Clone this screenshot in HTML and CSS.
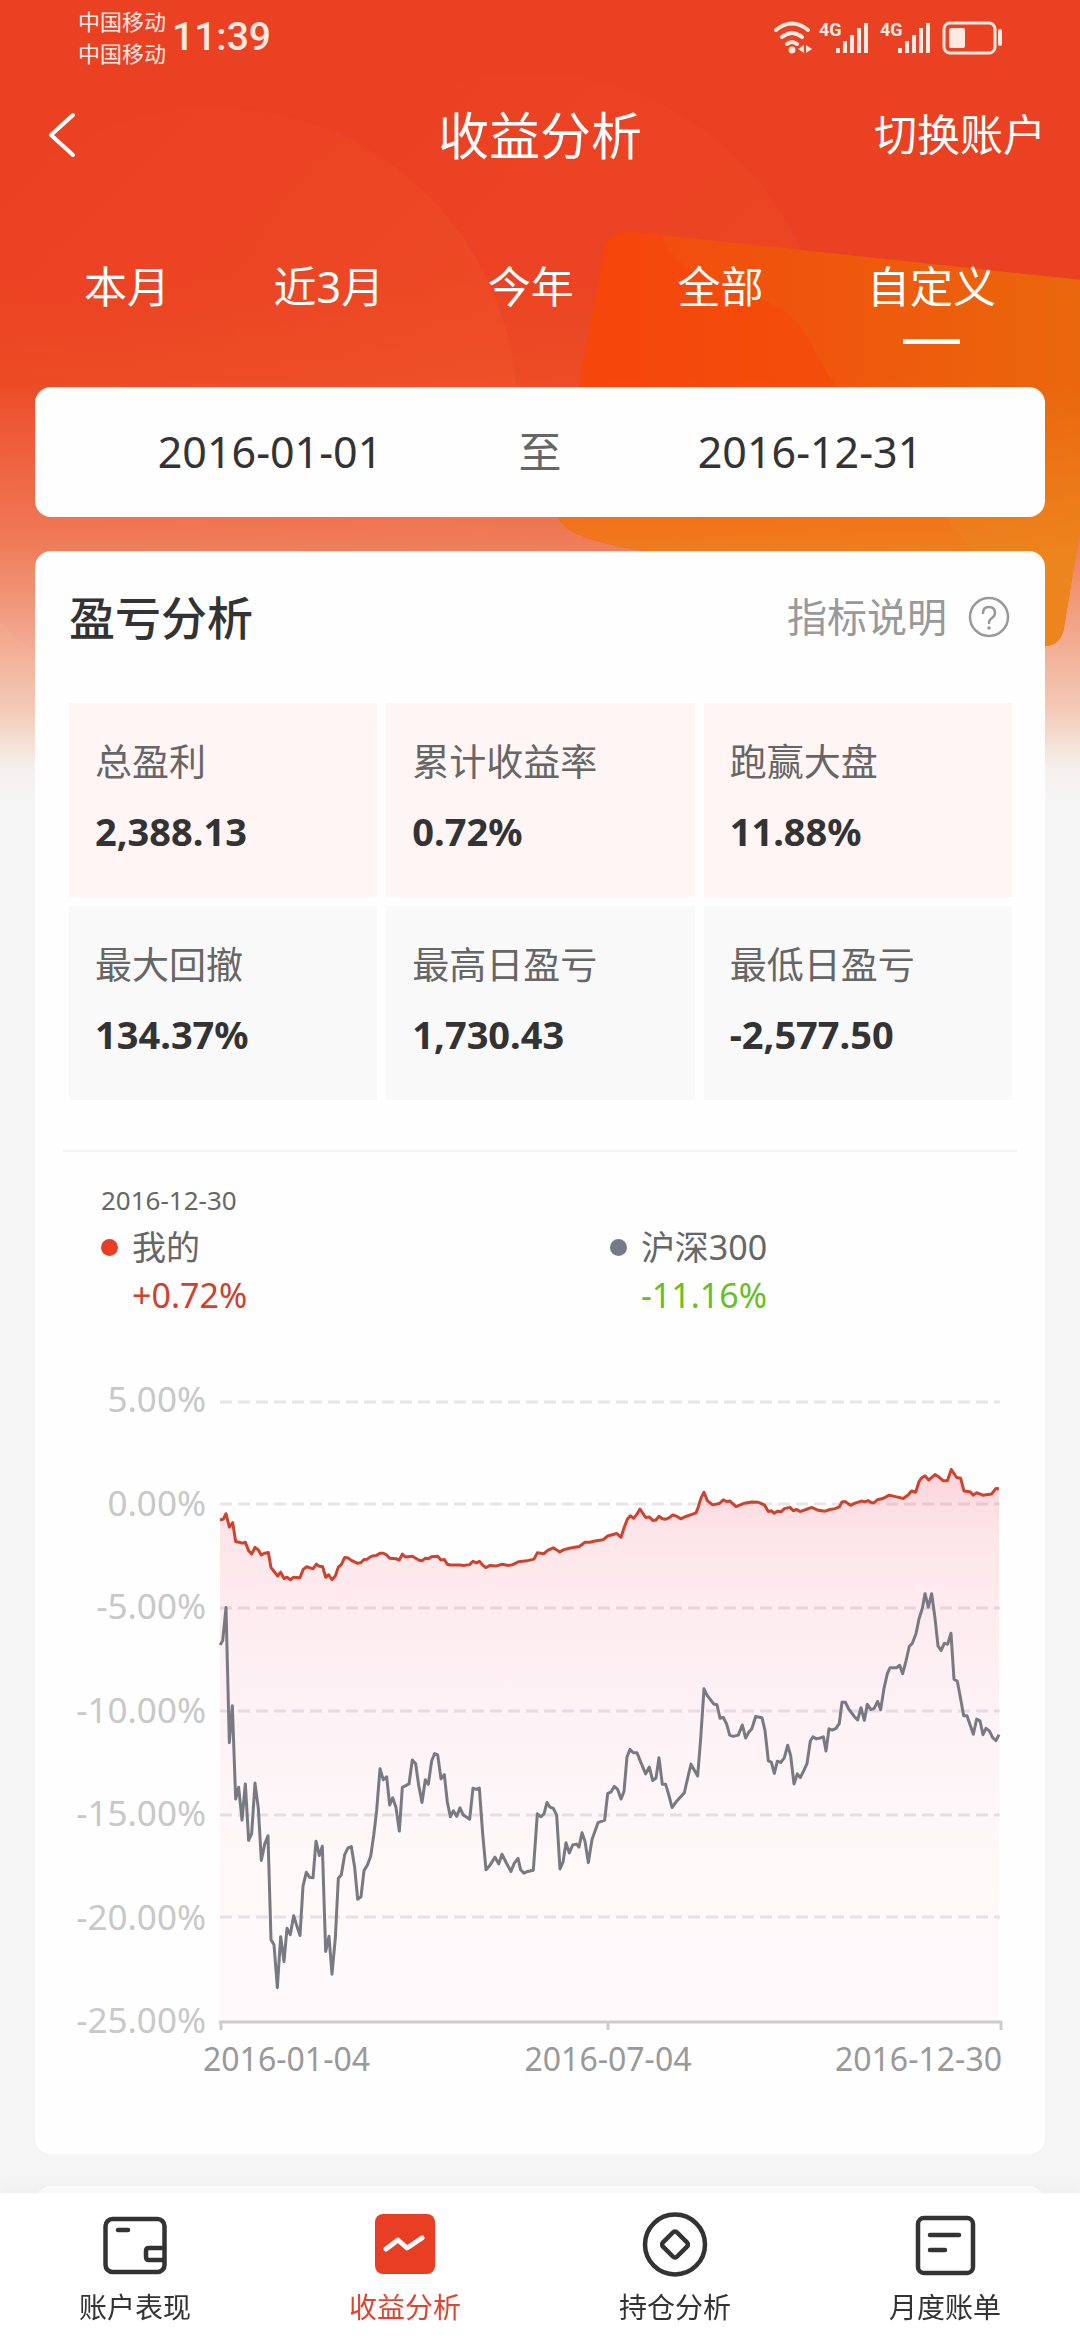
FILE: index.html
```html
<!DOCTYPE html>
<html lang="zh-CN">
<head>
<meta charset="utf-8">
<meta name="viewport" content="width=device-width, initial-scale=1">
<title>收益分析</title>
<link rel="stylesheet" href="styles.css">
</head>
<body>
<svg class="backdrop" viewBox="0 0 1080 800" preserveAspectRatio="xMidYMin slice" aria-hidden="true">
  <defs>
    <linearGradient id="base" x1="0" y1="0" x2="0" y2="1">
      <stop offset=".35" stop-color="#ea4122"/>
      <stop offset=".9" stop-color="#f06a30"/>
    </linearGradient>
    <linearGradient id="disc" x1="0" y1="0" x2="1" y2="1">
      <stop offset="0" stop-color="#f04426" stop-opacity="0"/>
      <stop offset="1" stop-color="#f05c2c"/>
    </linearGradient>
    <linearGradient id="fade" x1="0" y1="0" x2="0" y2="1">
      <stop offset="0" stop-color="#f5f5f5" stop-opacity="0"/>
      <stop offset=".38" stop-color="#f5f5f5" stop-opacity=".22"/>
      <stop offset=".78" stop-color="#f5f5f5" stop-opacity=".68"/>
      <stop offset=".93" stop-color="#f5f5f5" stop-opacity=".97"/>
      <stop offset="1" stop-color="#f5f5f5"/>
    </linearGradient>
    <linearGradient id="tile" x1="0" y1="0" x2="1" y2="0">
      <stop offset="0" stop-color="#f4470f"/>
      <stop offset=".5" stop-color="#ef560c"/>
      <stop offset="1" stop-color="#ea680c"/>
    </linearGradient>
    <linearGradient id="tileFade" gradientUnits="userSpaceOnUse" x1="0" y1="380" x2="0" y2="560">
      <stop offset="0" stop-color="#ee9024" stop-opacity="0"/>
      <stop offset="1" stop-color="#ee9024" stop-opacity=".75"/>
    </linearGradient>
    <clipPath id="tileShape">
      <path d="M632 232L1120 284L1064 628Q1060 650 1036 645L640 550Q590 542 570 530Q553 520 557 500L604 252Q608 230 632 232Z"/>
    </clipPath>
  </defs>
  <rect width="1080" height="800" fill="url(#base)"/>
  <circle cx="530" cy="370" r="296" fill="url(#disc)" opacity=".4"/>
  <circle cx="215" cy="410" r="302" fill="url(#disc)" opacity=".65"/>
  <rect y="380" width="1080" height="420" fill="url(#fade)"/>
  <g clip-path="url(#tileShape)">
    <rect x="540" y="220" width="560" height="440" fill="url(#tile)"/>
    <path d="M540 220H655Q672 270 720 285Q790 300 812 345T850 400L980 560V660H540Z" fill="#f8420c" opacity=".45"/>
    <rect x="540" y="220" width="560" height="440" fill="url(#tileFade)"/>
  </g>
</svg>

<header>
  <div class="status">
    <div class="carriers"><span>中国移动</span><span>中国移动</span></div>
    <time class="clock">11:39</time>
    <svg class="signals" viewBox="0 0 230 36" aria-hidden="true">
      <g fill="none" stroke="#ffe9e3" stroke-width="4" stroke-linecap="round">
        <path d="M4 11Q20 -2 36 11M10 18Q20 10 30 18M15 25Q20 21 25 25"/>
      </g>
      <g fill="#ffe9e3">
        <circle cx="20" cy="31" r="3.4"/>
        <path d="M26 30l6-4v8zM40 30l-6-4v8z"/>
        <text class="net" x="47" y="17">4G</text>
        <path d="M64 29h4v5h-4zM71 22h4v12h-4zM78 16h4v18h-4zM85 9h4v25h-4zM92 4h4v30h-4z"/>
        <text class="net" x="108" y="17">4G</text>
        <path d="M126 29h4v5h-4zM133 22h4v12h-4zM140 16h4v18h-4zM147 9h4v25h-4zM154 4h4v30h-4z"/>
        <rect x="177" y="9" width="16" height="20" rx="2"/>
        <rect x="226" y="10" width="4" height="17" rx="2"/>
      </g>
      <rect x="172" y="4" width="51" height="30" rx="6" fill="none" stroke="#ffe9e3" stroke-width="3"/>
    </svg>
  </div>
  <div class="titlebar">
    <button class="back" type="button" aria-label="返回">
      <svg viewBox="0 0 28 46"><path d="M25 3L3 23L25 43" fill="none" stroke="#fff" stroke-width="4" stroke-linecap="round" stroke-linejoin="round"/></svg>
    </button>
    <h1>收益分析</h1>
    <button class="switch" type="button">切换账户</button>
  </div>
  <div class="periods">
    <button type="button">本月</button>
    <button type="button">近3月</button>
    <button type="button">今年</button>
    <button type="button">全部</button>
    <button type="button" class="active">自定义</button>
  </div>
</header>

<main>
  <section class="card range">
    <button type="button">2016-01-01</button>
    <span>至</span>
    <button type="button">2016-12-31</button>
  </section>

  <section class="card analysis">
    <div class="heading">
      <h2>盈亏分析</h2>
      <button type="button" class="help">指标说明
        <svg viewBox="0 0 44 44" aria-hidden="true">
          <circle cx="22" cy="22" r="19" fill="none" stroke="#999" stroke-width="2.5"/>
          <path d="M16 18q0-6 6-6t6 6q0 3-3 5t-3 5" fill="none" stroke="#999" stroke-width="2.5" stroke-linecap="round"/>
          <circle cx="22" cy="33" r="1.8" fill="#999"/>
        </svg>
      </button>
    </div>
    <dl class="metrics">
      <div class="warm"><dt>总盈利</dt><dd>2,388.13</dd></div>
      <div class="warm"><dt>累计收益率</dt><dd>0.72%</dd></div>
      <div class="warm"><dt>跑赢大盘</dt><dd>11.88%</dd></div>
      <div><dt>最大回撤</dt><dd>134.37%</dd></div>
      <div><dt>最高日盈亏</dt><dd>1,730.43</dd></div>
      <div><dt>最低日盈亏</dt><dd>-2,577.50</dd></div>
    </dl>
    <div class="legend">
      <time>2016-12-30</time>
      <div class="series mine"><i></i><span>我的</span><b>+0.72%</b></div>
      <div class="series index"><i></i><span>沪深300</span><b>-11.16%</b></div>
    </div>
    <svg class="chart" viewBox="0 0 1010 710" role="img" aria-label="我的与沪深300收益率走势">
      <defs>
        <linearGradient id="area" gradientUnits="userSpaceOnUse" x1="0" y1="215" x2="0" y2="1528">
          <stop offset="0" stop-color="#fbd3da"/>
          <stop offset=".12" stop-color="#fde6ea"/>
          <stop offset=".4" stop-color="#fdf1f5"/>
          <stop offset=".7" stop-color="#fef8f9"/>
          <stop offset="1" stop-color="#fefafb"/>
        </linearGradient>
      </defs>
      <g transform="translate(165 0) scale(.33333 .42092)">
        <path fill="url(#area)" d="M60 1528L60 335 70 333 78 320 88 352 98 341 107 386 117 388 127 390 136 388 146 408 155 416 165 400 175 406 184 418 194 414 205 412 213 448 223 458 233 468 242 459 252 474 261 471 271 477 281 471 300 472 309 453 320 446 339 451 349 440 358 445 368 446 377 471 386 465 396 477 406 468 415 447 424 441 434 424 444 425 454 431 473 438 483 436 492 429 502 428 512 422 521 420 530 419 540 414 550 414 560 418 569 426 588 427 598 430 607 416 617 423 637 421 656 430 666 432 676 426 685 427 695 422 713 421 723 430 733 429 742 440 751 442 780 442 790 443 809 441 819 433 829 437 838 433 848 442 857 448 870 443 890 444 906 440 925 443 938 441 956 434 980 432 1002 428 1012 413 1032 415 1043 407 1060 401 1070 406 1079 411 1090 406 1108 402 1138 398 1155 388 1170 388 1185 385 1209 382 1223 373 1250 367 1263 376 1272 354 1282 333 1291 325 1301 331 1311 321 1320 309 1337 329 1348 328 1358 336 1368 335 1377 326 1387 332 1397 333 1407 330 1418 323 1430 326 1442 332 1460 326 1478 321 1488 318 1495 304 1503 283 1512 269 1522 289 1538 299 1558 296 1570 287 1580 291 1590 290 1608 303 1630 296 1655 292 1675 293 1693 299 1705 315 1714 313 1723 319 1732 314 1744 315 1753 308 1770 305 1780 313 1790 310 1800 315 1818 310 1835 305 1855 312 1875 314 1890 310 1905 308 1918 304 1926 292 1935 291 1952 300 1965 295 1985 290 1995 292 2004 289 2015 294 2022 294 2032 287 2048 284 2068 276 2090 280 2110 284 2125 275 2135 266 2147 269 2157 244 2165 235 2175 230 2186 240 2205 227 2217 233 2230 242 2242 242 2254 215 2270 234 2282 236 2292 266 2310 268 2320 276 2330 270 2348 276 2375 273 2388 260 2397 261 2397 1528Z"/>
      </g>
      <g class="grid">
        <path d="M185 23H965M185 125H965M185 229H965M185 332H965M185 436H965M185 538H965"/>
      </g>
      <g transform="translate(165 0) scale(.33333 .42092)">
        <path class="line index-line" d="M60 632L68 622 78 543 88 864 97 776 107 998 116 970 126 1048 136 962 146 1096 155 1080 165 960 175 1020 184 1144 194 1105 204 1085 213 1332 222 1344 232 1446 242 1325 252 1384 261 1305 271 1320 281 1275 290 1298 300 1322 309 1205 319 1172 329 1184 339 1185 348 1098 358 1132 367 1110 377 1360 387 1324 396 1414 406 1328 415 1186 424 1178 434 1130 444 1114 454 1111 464 1160 473 1236 483 1230 492 1168 502 1155 512 1134 521 1085 530 1025 540 926 550 952 560 945 569 1012 578 995 588 1018 598 1074 607 970 627 962 637 905 647 914 656 965 666 1006 676 952 685 963 695 907 704 890 713 893 723 950 733 940 742 1005 751 1040 760 1026 770 1039 780 1019 790 1036 809 1046 819 972 829 975 838 972 848 1080 858 1166 870 1155 885 1136 896 1152 906 1129 918 1148 933 1170 943 1150 954 1139 962 1166 972 1174 983 1170 1000 1167 1012 1033 1023 1040 1032 1033 1041 1006 1050 1017 1060 1020 1070 1036 1080 1164 1089 1148 1098 1102 1108 1126 1118 1107 1130 1105 1137 1112 1146 1078 1155 1098 1165 1149 1176 1094 1194 1054 1214 1048 1223 985 1233 981 1243 968 1253 975 1263 998 1272 980 1281 898 1290 880 1300 888 1311 888 1320 906 1337 938 1348 922 1358 954 1368 948 1377 900 1387 963 1397 963 1407 990 1416 1018 1430 1003 1453 983 1464 945 1473 915 1493 943 1502 855 1512 736 1521 751 1541 772 1551 774 1560 806 1570 804 1580 820 1589 846 1600 849 1615 846 1627 822 1637 853 1647 838 1655 832 1667 802 1686 805 1695 835 1705 907 1714 910 1723 937 1732 908 1742 911 1753 900 1763 870 1772 895 1782 962 1792 938 1801 947 1811 931 1821 914 1831 860 1839 850 1849 855 1860 853 1870 850 1878 884 1887 831 1897 834 1908 830 1918 818 1926 768 1936 768 1946 784 1965 804 1973 810 1983 781 1993 811 2002 773 2012 785 2022 783 2033 766 2042 786 2052 735 2062 700 2070 686 2090 686 2099 680 2108 700 2118 670 2128 635 2137 628 2148 605 2157 570 2167 545 2175 510 2185 542 2195 510 2205 568 2214 634 2223 645 2233 628 2243 630 2253 604 2262 713 2272 718 2282 760 2291 800 2301 800 2320 844 2330 808 2340 812 2349 845 2358 830 2368 836 2378 852 2388 859 2397 845"/>
        <path class="line mine-line" d="M60 335L70 333 78 320 88 352 98 341 107 386 117 388 127 390 136 388 146 408 155 416 165 400 175 406 184 418 194 414 205 412 213 448 223 458 233 468 242 459 252 474 261 471 271 477 281 471 300 472 309 453 320 446 339 451 349 440 358 445 368 446 377 471 386 465 396 477 406 468 415 447 424 441 434 424 444 425 454 431 473 438 483 436 492 429 502 428 512 422 521 420 530 419 540 414 550 414 560 418 569 426 588 427 598 430 607 416 617 423 637 421 656 430 666 432 676 426 685 427 695 422 713 421 723 430 733 429 742 440 751 442 780 442 790 443 809 441 819 433 829 437 838 433 848 442 857 448 870 443 890 444 906 440 925 443 938 441 956 434 980 432 1002 428 1012 413 1032 415 1043 407 1060 401 1070 406 1079 411 1090 406 1108 402 1138 398 1155 388 1170 388 1185 385 1209 382 1223 373 1250 367 1263 376 1272 354 1282 333 1291 325 1301 331 1311 321 1320 309 1337 329 1348 328 1358 336 1368 335 1377 326 1387 332 1397 333 1407 330 1418 323 1430 326 1442 332 1460 326 1478 321 1488 318 1495 304 1503 283 1512 269 1522 289 1538 299 1558 296 1570 287 1580 291 1590 290 1608 303 1630 296 1655 292 1675 293 1693 299 1705 315 1714 313 1723 319 1732 314 1744 315 1753 308 1770 305 1780 313 1790 310 1800 315 1818 310 1835 305 1855 312 1875 314 1890 310 1905 308 1918 304 1926 292 1935 291 1952 300 1965 295 1985 290 1995 292 2004 289 2015 294 2022 294 2032 287 2048 284 2068 276 2090 280 2110 284 2125 275 2135 266 2147 269 2157 244 2165 235 2175 230 2186 240 2205 227 2217 233 2230 242 2242 242 2254 215 2270 234 2282 236 2292 266 2310 268 2320 276 2330 270 2348 276 2375 273 2388 260 2397 261"/>
      </g>
      <path class="axis" d="M184 643H967M186 643V651M573 643V651M966 643V651"/>
      <g class="ylabels">
        <text x="171" y="33">5.00%</text>
        <text x="171" y="137">0.00%</text>
        <text x="171" y="240">-5.00%</text>
        <text x="171" y="344">-10.00%</text>
        <text x="171" y="447">-15.00%</text>
        <text x="171" y="551">-20.00%</text>
        <text x="171" y="654">-25.00%</text>
      </g>
      <g class="xlabels">
        <text x="168" y="692">2016-01-04</text>
        <text x="573" y="692" text-anchor="middle">2016-07-04</text>
        <text x="967" y="692" text-anchor="end">2016-12-30</text>
      </g>
    </svg>
  </section>
  <section class="card next"></section>
</main>

<nav class="tabbar">
  <a href="#account">
    <svg viewBox="0 0 72 72" fill="none" stroke="#333" stroke-width="4.5" stroke-linecap="round" aria-hidden="true">
      <rect x="6.5" y="11" width="59" height="53" rx="7"/><path d="M19 22H29M65 40H50Q47 40 47 43V49Q47 52 50 52H65"/>
    </svg>
    <span>账户表现</span>
  </a>
  <a href="#profit" class="current" aria-current="page">
    <svg viewBox="0 0 72 72" aria-hidden="true">
      <rect x="6" y="6" width="60" height="60" rx="8" fill="#e83e23"/>
      <path d="M17 41L29 32L38 40L53 30" fill="none" stroke="#fff" stroke-width="5" stroke-linecap="round" stroke-linejoin="round"/>
    </svg>
    <span>收益分析</span>
  </a>
  <a href="#position">
    <svg viewBox="0 0 72 72" fill="none" stroke="#333" stroke-width="4.5" aria-hidden="true">
      <circle cx="36" cy="36.5" r="30"/><rect x="26" y="26.5" width="20" height="20" rx="3" transform="rotate(45 36 36.5)"/>
    </svg>
    <span>持仓分析</span>
  </a>
  <a href="#bill">
    <svg viewBox="0 0 72 72" fill="none" stroke="#333" stroke-width="4.5" stroke-linecap="round" aria-hidden="true">
      <rect x="9" y="10" width="55" height="55" rx="6"/><path d="M21 27H50M21 42H36"/>
    </svg>
    <span>月度账单</span>
  </a>
</nav>
</body>
</html>
```
FILE: styles.css
```css
* { box-sizing: border-box; margin: 0; padding: 0; }

body {
  position: relative;
  min-height: 100vh;
  overflow-x: hidden;
  background: #f5f5f5;
  color: #333;
  font-family: "Noto Sans", "Noto Sans CJK SC", sans-serif;
}

button {
  border: 0;
  background: none;
  color: inherit;
  font: inherit;
}

.backdrop {
  position: absolute;
  top: 0;
  left: 0;
  z-index: -1;
  width: 100%;
  height: 800px;
}

header { color: #fff; }

.status {
  display: flex;
  align-items: center;
  height: 74px;
  padding: 0 78px;
  color: #ffe9e3;
}
.carriers {
  display: flex;
  flex-direction: column;
  font-size: 22px;
  line-height: 32px;
}
.clock {
  margin-left: 6px;
  font: 500 39px/48px Roboto, sans-serif;
}
.signals { width: 230px; height: 36px; margin-left: auto; }
.net { font: 700 18px Roboto, sans-serif; }

.titlebar {
  display: grid;
  grid-template-columns: 1fr auto 1fr;
  align-items: center;
  height: 122px;
  padding: 0 34px;
}
.titlebar h1 { font-size: 51px; font-weight: 400; line-height: 76px; }
.back { justify-self: start; height: 46px; padding-left: 14px; }
.back svg { display: block; width: 28px; height: 46px; }
.switch { justify-self: end; font-size: 43px; line-height: 64px; }

.periods {
  display: flex;
  justify-content: space-between;
  padding: 59px 84px 43px;
}
.periods button {
  font-size: 43px;
  line-height: 64px;
  padding-bottom: 25px;
}
.periods .active {
  background: linear-gradient(#fff, #fff) center bottom / 57px 5px no-repeat;
}

main { padding: 0 35px; }
.card { background: #fefefe; border-radius: 16px; }

.range {
  display: grid;
  grid-template-columns: 1fr 70px 1fr;
  align-items: center;
  height: 130px;
  font-size: 43px;
  line-height: 64px;
  text-align: center;
}
.range span { color: #666; }

.analysis { margin-top: 34px; padding: 33px 0 65px; }
.heading {
  display: flex;
  align-items: center;
  justify-content: space-between;
  padding: 0 34px;
}
.heading h2 { font-size: 46px; font-weight: 500; line-height: 66px; }
.help {
  display: flex;
  align-items: center;
  gap: 20px;
  color: #999;
  font-size: 40px;
  line-height: 60px;
}
.help svg { width: 44px; height: 44px; }

.metrics {
  display: grid;
  grid-template-columns: repeat(3, 1fr);
  gap: 9px;
  margin: 53px 33px 50px 34px;
}
.metrics div { padding: 31px 26px 40px; background: #f9f9f9; }
.metrics .warm { background: #fef5f4; }
.metrics dt { color: #666; font-size: 37px; line-height: 56px; }
.metrics dd { margin-top: 15px; font-size: 38px; font-weight: 700; line-height: 52px; }

.legend {
  display: grid;
  grid-template-columns: 5fr 4fr;
  margin: 0 28px;
  padding: 33px 0 60px 38px;
  border-top: 2px solid #f5f5f5;
  color: #666;
  font-size: 34px;
}
.legend time {
  grid-column: 1 / -1;
  margin-bottom: 8px;
  font-size: 26px;
  line-height: 30px;
}
.series {
  display: grid;
  grid-template-columns: 17px 1fr;
  column-gap: 14px;
  align-items: center;
  line-height: 48px;
}
.series i { width: 17px; height: 17px; border-radius: 50%; }
.series b { grid-column: 2; font-weight: 400; }
.mine i { background: #e83e23; }
.mine b { color: #d0402c; }
.index i { background: #777988; }
.index b { color: #67c023; }

.chart { display: block; width: 100%; }
.line {
  fill: none;
  stroke-width: 3;
  stroke-linejoin: round;
  vector-effect: non-scaling-stroke;
}
.index-line { stroke: #787a82; }
.mine-line { stroke: #cf432e; }
.grid path {
  fill: none;
  stroke: #8a7f9a;
  stroke-opacity: .2;
  stroke-width: 3;
  stroke-dasharray: 12 6;
}
.axis { fill: none; stroke: #cfcbcd; stroke-width: 3; }
.ylabels { fill: #c8c8c8; font-size: 35px; text-anchor: end; }
.xlabels { fill: #999; font-size: 32px; }

.next { height: 80px; margin-top: 32px; }

.tabbar {
  position: fixed;
  right: 0;
  bottom: 0;
  left: 0;
  display: flex;
  padding: 15px 0;
  background: #fff;
  box-shadow: 0 -4px 14px rgba(0, 0, 0, .04);
}
.tabbar a {
  flex: 1;
  display: flex;
  flex-direction: column;
  align-items: center;
  gap: 9px;
  color: #333;
  font-size: 28px;
  line-height: 36px;
  text-decoration: none;
}
.tabbar svg { width: 72px; height: 72px; }
.tabbar .current { color: #e0432e; }
```
